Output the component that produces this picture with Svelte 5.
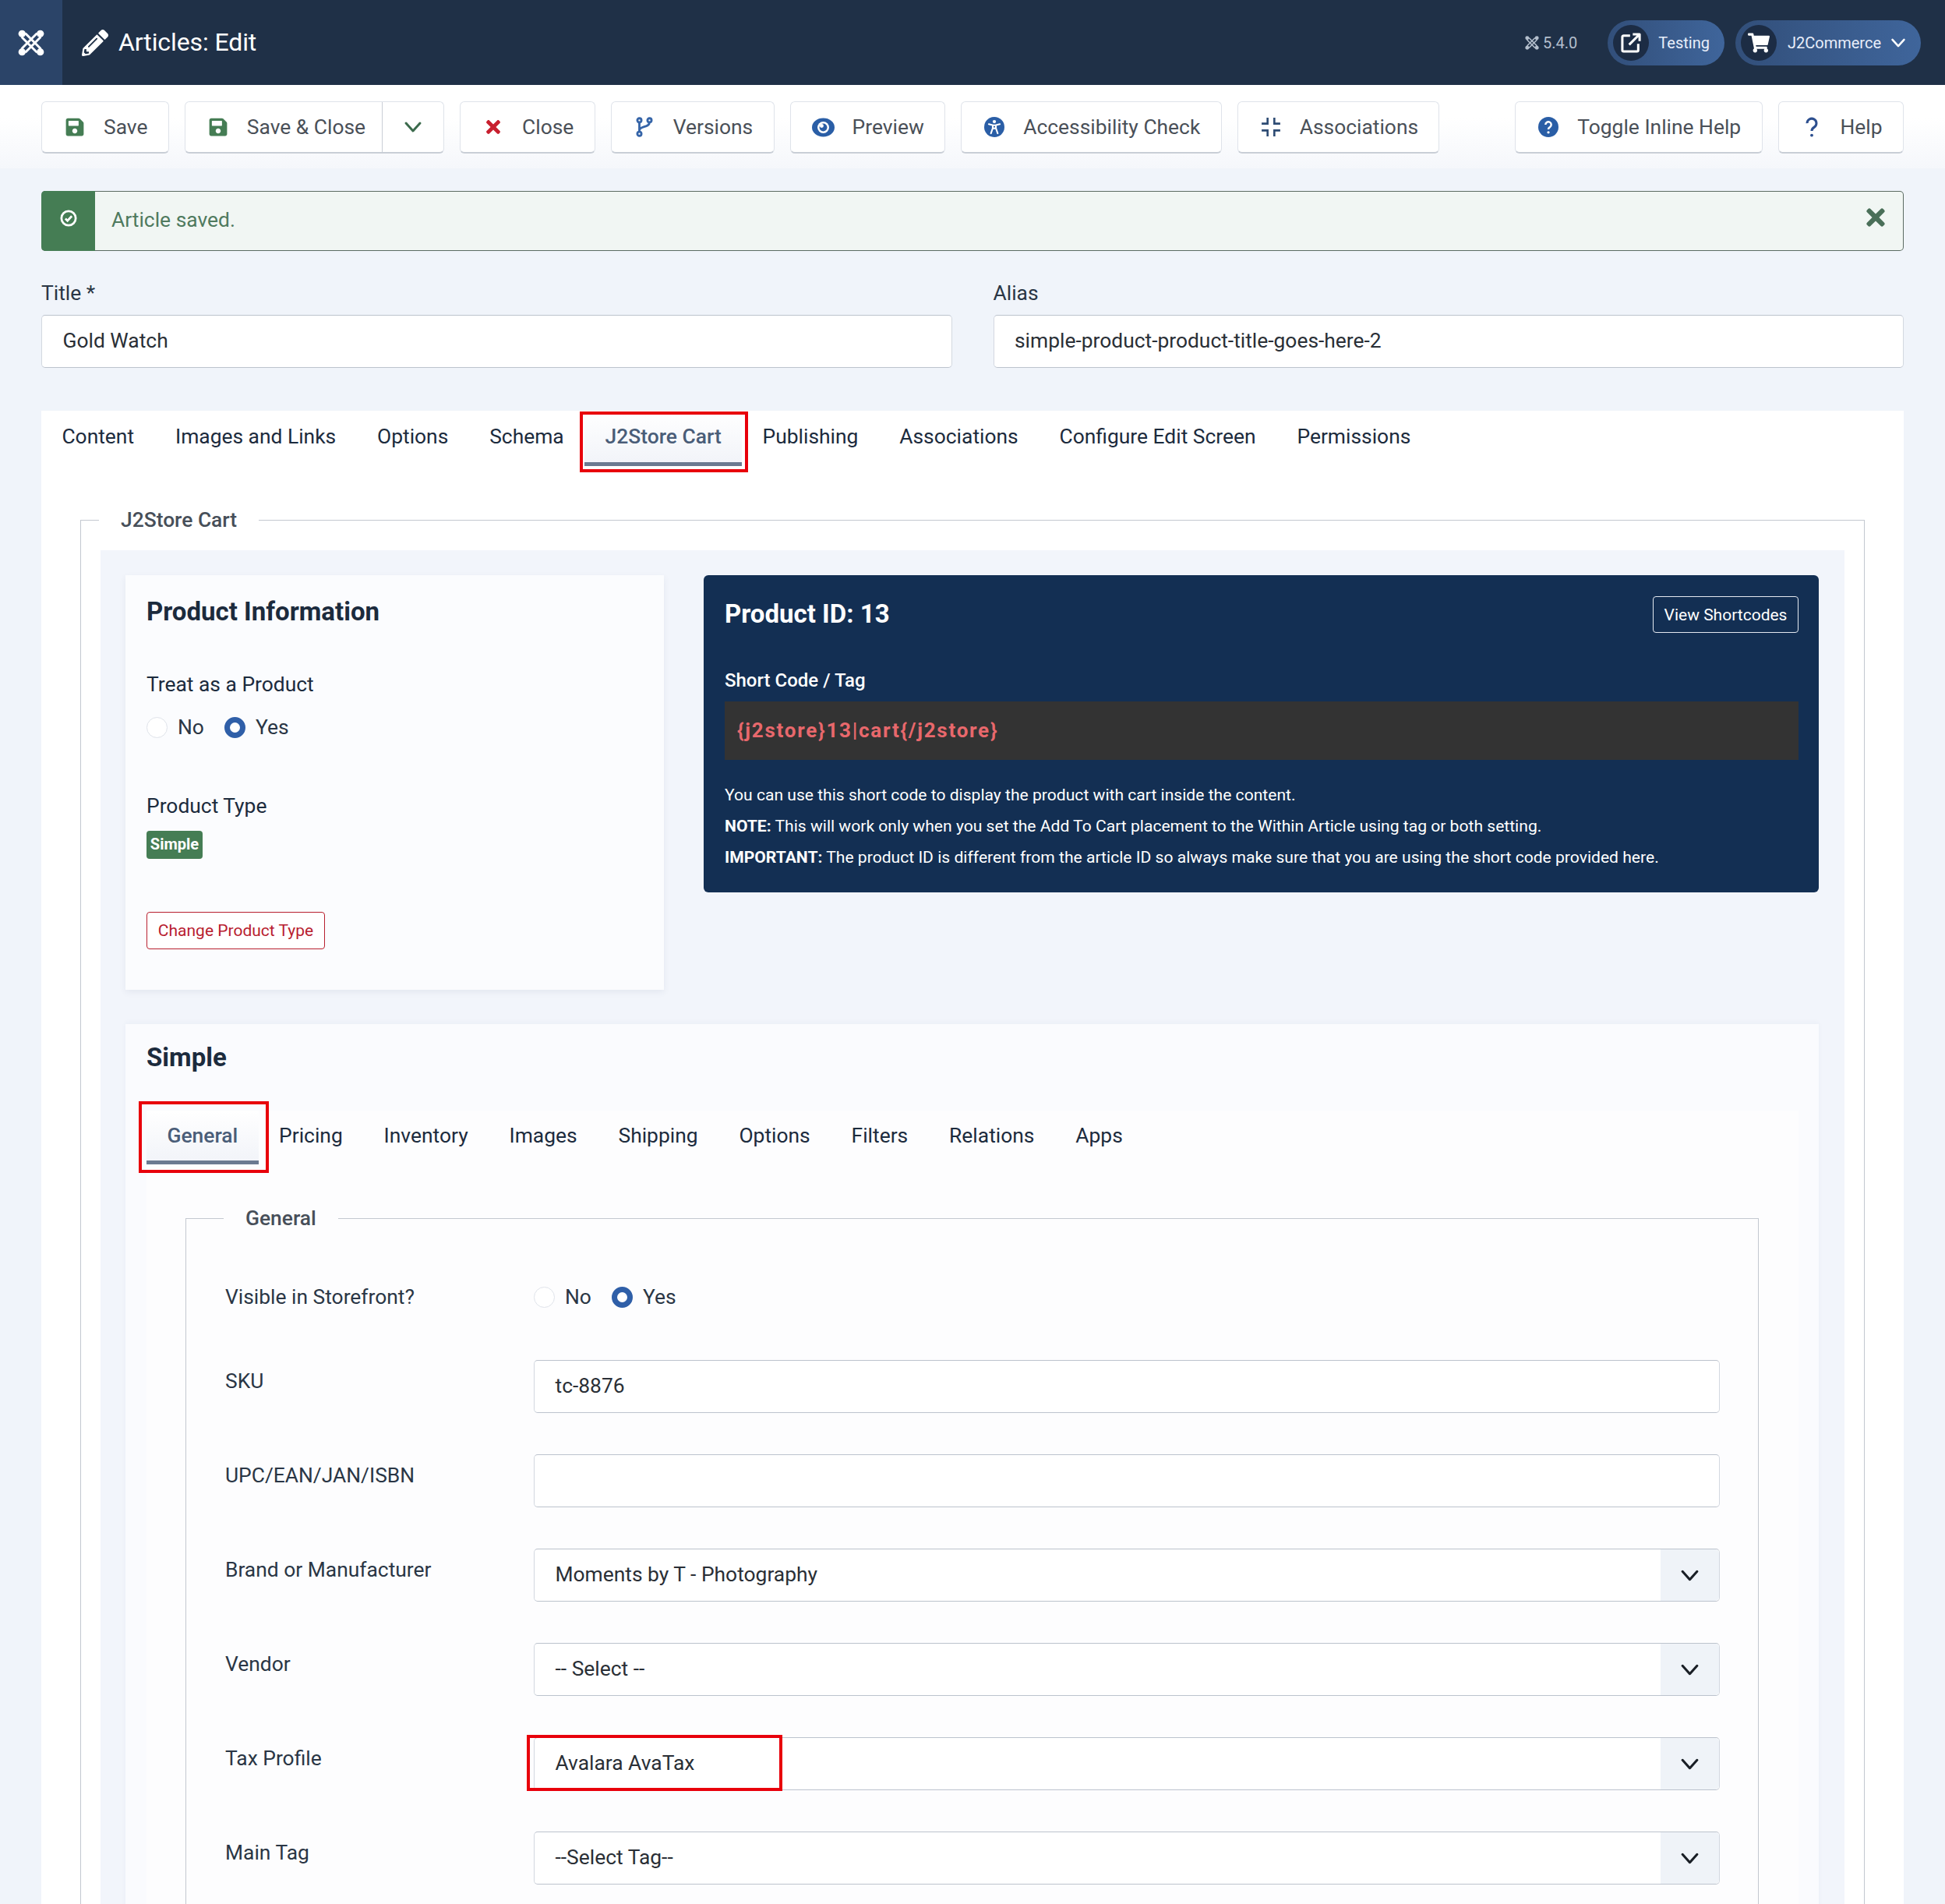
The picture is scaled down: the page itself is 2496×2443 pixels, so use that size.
<script lang="ts">
  const icons = {
    save: { vb: "0 0 448 512", d: "M433.941 129.941l-83.882-83.882A48 48 0 0 0 316.118 32H48C21.49 32 0 53.49 0 80v352c0 26.51 21.49 48 48 48h352c26.51 0 48-21.49 48-48V163.882a48 48 0 0 0-14.059-33.941zM224 416c-35.346 0-64-28.654-64-64 0-35.346 28.654-64 64-64s64 28.654 64 64c0 35.346-28.654 64-64 64zm96-304.52V212c0 6.627-5.373 12-12 12H76c-6.627 0-12-5.373-12-12V108c0-6.627 5.373-12 12-12h228.52c3.183 0 6.235 1.264 8.485 3.515l3.48 3.48A11.996 11.996 0 0 1 320 111.48z" },
    times: { vb: "0 0 352 512", d: "M242.72 256l100.07-100.07c12.28-12.28 12.28-32.19 0-44.48l-22.24-22.24c-12.28-12.28-32.19-12.28-44.48 0L176 189.28 75.93 89.21c-12.28-12.28-32.19-12.28-44.48 0L9.21 111.45c-12.28 12.28-12.28 32.19 0 44.48L109.28 256 9.21 356.07c-12.28 12.28-12.28 32.19 0 44.48l22.24 22.24c12.28 12.28 32.2 12.28 44.48 0L176 322.72l100.07 100.07c12.28 12.28 32.2 12.28 44.48 0l22.24-22.24c12.28-12.28 12.28-32.19 0-44.48L242.72 256z" },
    pencil: { vb: "0 0 512 512", d: "M497.9 142.1l-46.1 46.1c-4.7 4.7-12.3 4.7-17 0l-111-111c-4.7-4.7-4.7-12.3 0-17l46.1-46.1c18.7-18.7 49.1-18.7 67.9 0l60.1 60.1c18.8 18.7 18.8 49.1 0 67.9zM284.2 99.8L21.6 362.4.4 483.9c-2.9 16.4 11.4 30.6 27.8 27.8l121.5-21.3 262.6-262.6c4.7-4.7 4.7-12.3 0-17l-111-111c-4.8-4.7-12.4-4.7-17.1 0zM124.1 339.9c-5.5-5.5-5.5-14.3 0-19.8l154-154c5.5-5.5 14.3-5.5 19.8 0s5.5 14.3 0 19.8l-154 154c-5.5 5.5-14.3 5.5-19.8 0zM88 424h48v36.3l-64.5 11.3-31.1-31.1L51.7 376H88v48z" },
    cart: { vb: "0 0 576 512", d: "M528.12 301.319l47.273-208C578.806 78.301 567.391 64 551.99 64H159.208l-9.166-44.81C147.758 8.021 137.93 0 126.529 0H24C10.745 0 0 10.745 0 24v16c0 13.255 10.745 24 24 24h69.883l70.248 343.435C147.325 417.1 136 435.222 136 456c0 30.928 25.072 56 56 56s56-25.072 56-56c0-15.674-6.447-29.835-16.824-40h209.647C430.447 426.165 424 440.326 424 456c0 30.928 25.072 56 56 56s56-25.072 56-56c0-22.172-12.888-41.332-31.579-50.405l5.517-24.276c3.413-15.018-8.002-29.319-23.403-29.319H218.117l-6.545-32h293.145c11.206 0 20.92-7.754 23.403-18.681z" },
  };

  const leftTools = [
    { label: "Versions", icon: "branch" },
    { label: "Preview", icon: "eye" },
    { label: "Accessibility Check", icon: "access" },
    { label: "Associations", icon: "compress" },
  ];

  const mainTabs = ["Content", "Images and Links", "Options", "Schema", "J2Store Cart", "Publishing", "Associations", "Configure Edit Screen", "Permissions"];
  const subTabs = ["General", "Pricing", "Inventory", "Images", "Shipping", "Options", "Filters", "Relations", "Apps"];

  const selects = [
    { label: "Brand or Manufacturer", value: "Moments by T - Photography" },
    { label: "Vendor", value: "-- Select --" },
    { label: "Tax Profile", value: "Avalara AvaTax", mark: true },
    { label: "Main Tag", value: "--Select Tag--" },
  ];
</script>

{#snippet fa(name, color)}
  <svg class="fa" viewBox={icons[name].vb} fill={color}><path d={icons[name].d} /></svg>
{/snippet}

{#snippet chevron(cls)}
  <svg class={cls} viewBox="0 0 24 24" fill="none" stroke="currentColor" stroke-width="3" stroke-linecap="round" stroke-linejoin="round"><path d="M3 7l9 10 9-10" /></svg>
{/snippet}

{#snippet joomla(cls)}
  <svg class={cls} viewBox="0 0 32 32" fill="currentColor" stroke="currentColor">
    <circle cx="5" cy="5" r="4.4" stroke="none" />
    <circle cx="27" cy="5" r="4.4" stroke="none" />
    <circle cx="5" cy="27" r="4.4" stroke="none" />
    <circle cx="27" cy="27" r="4.4" stroke="none" />
    <path d="M9 4.500L27.500 23M4.500 9L23 27.500M23 4.500L4.500 23M27.500 9L9 27.500" fill="none" stroke-width="2.800" />
  </svg>
{/snippet}

{#snippet toolIcon(name, color)}
  {#if name === "branch"}
    <svg class="ti" viewBox="0 0 24 24" fill="none" stroke="#3564a8" stroke-width="2.600">
      <circle cx="6" cy="4" r="2.400" /><circle cx="18" cy="4" r="2.400" /><circle cx="6" cy="20" r="2.400" />
      <path d="M6 6.500v11M18 6.500c0 6.500-12 4-12 9.500" />
    </svg>
  {:else if name === "eye"}
    <svg class="ti eye" viewBox="0 0 28 24">
      <ellipse cx="14" cy="12" rx="14" ry="11.500" fill="#2a5ea6" />
      <circle cx="14" cy="12" r="7.200" fill="#fff" />
      <circle cx="14" cy="12" r="4.800" fill="#2a5ea6" />
      <circle cx="12" cy="10" r="2.400" fill="#fff" />
    </svg>
  {:else if name === "access"}
    <svg class="ti" viewBox="0 0 24 24">
      <circle cx="12" cy="12" r="12" fill="#2a5ea6" />
      <circle cx="12" cy="5.600" r="2" fill="#fff" />
      <path d="M5.500 8.600l4.600 1.200v3.600L8 19.500M18.500 8.600l-4.600 1.200v3.600l2.100 6.100M10 10h4M10.200 13.500h3.600" fill="none" stroke="#fff" stroke-width="1.900" stroke-linecap="round" />
    </svg>
  {:else if name === "compress"}
    <svg class="ti" viewBox="0 0 24 24" fill="none" stroke="#2d4b73" stroke-width="2.400">
      <path d="M8 1v7H1M16 1v7h7M1 16h7v7M23 16h-7v7" />
    </svg>
  {:else if name === "qcircle"}
    <svg class="ti" viewBox="0 0 24 24">
      <circle cx="12" cy="12" r="12" fill="#2a5ea6" />
      <path d="M8.600 9.200a3.400 3.400 0 1 1 5.200 2.900c-1.200.7-1.800 1.300-1.800 2.700" fill="none" stroke="#fff" stroke-width="2.300" />
      <circle cx="12" cy="18.300" r="1.500" fill="#fff" />
    </svg>
  {:else if name === "q"}
    <svg class="ti" viewBox="0 0 24 24">
      <path d="M6.500 7.500a5.500 5.500 0 1 1 8.500 4.600c-2 1.300-3 2.300-3 4.400" fill="none" stroke="#2d4f8f" stroke-width="2.800" />
      <circle cx="12" cy="21.800" r="1.800" fill="#2d4f8f" />
    </svg>
  {:else}
    {@render fa(name, color)}
  {/if}
{/snippet}

<div class="page">
  <header class="topbar">
    <div class="logo">{@render joomla("logo-mark")}</div>
    <div class="page-title">
      {@render fa("pencil", "#fff")}
      <span>Articles: Edit</span>
    </div>
    <div class="top-right">
      <span class="version">{@render joomla("ver-mark")}5.4.0</span>
      <div class="pill testing">
        <span class="pill-ic">
          <svg viewBox="0 0 24 24" fill="none" stroke="#fff" stroke-width="2.600" stroke-linejoin="round">
            <path d="M11 4H4a1.500 1.500 0 0 0-1.500 1.500v14.500A1.500 1.500 0 0 0 4 21.500h14.500a1.500 1.500 0 0 0 1.500-1.500v-7" />
            <path d="M10 14L21 3M14 2.500h7.500V10" />
          </svg>
        </span>
        <span class="pill-text">Testing</span>
      </div>
      <div class="pill">
        <span class="pill-ic">{@render fa("cart", "#fff")}</span>
        <span class="pill-text">J2Commerce</span>
        {@render chevron("pill-chev")}
      </div>
    </div>
  </header>

  <div class="toolbar">
    <button class="tool"><span class="tool-ic">{@render fa("save", "#457d54")}</span>Save</button>
    <div class="tool split">
      <span class="split-main"><span class="tool-ic">{@render fa("save", "#457d54")}</span>Save &amp; Close</span>
      <span class="split-toggle">{@render chevron("split-chev")}</span>
    </div>
    <button class="tool"><span class="tool-ic">{@render fa("times", "#c81f2e")}</span>Close</button>
    {#each leftTools as t}
      <button class="tool"><span class="tool-ic">{@render toolIcon(t.icon)}</span>{t.label}</button>
    {/each}
    <span class="tool-spacer"></span>
    <button class="tool"><span class="tool-ic">{@render toolIcon("qcircle")}</span>Toggle Inline Help</button>
    <button class="tool"><span class="tool-ic">{@render toolIcon("q")}</span>Help</button>
  </div>

  <main class="content">
    <div class="alert">
      <div class="alert-ic">
        <svg viewBox="0 0 24 24" fill="none" stroke="#fff" stroke-width="3"><circle cx="12" cy="12" r="10" /><path d="M7.500 12.500l3 3 6-6.500" /></svg>
      </div>
      <span class="alert-text">Article saved.</span>
      <span class="alert-close">{@render fa("times", "#4a6f58")}</span>
    </div>

    <div class="title-row">
      <div>
        <div class="field-label">Title *</div>
        <div class="input">Gold Watch</div>
      </div>
      <div>
        <div class="field-label">Alias</div>
        <div class="input">simple-product-product-title-goes-here-2</div>
      </div>
    </div>

    <section class="panel">
      <nav class="tabs">
        {#each mainTabs as tab}
          <span class="tab" class:active={tab === "J2Store Cart"}>
            {tab}
            {#if tab === "J2Store Cart"}<i class="mark mark-main"></i>{/if}
          </span>
        {/each}
      </nav>

      <fieldset class="fs fs-main">
        <legend>J2Store Cart</legend>
        <div class="inner">
          <div class="top-cards">
            <div class="info-card">
              <h3>Product Information</h3>
              <div class="info-label first">Treat as a Product</div>
              <div class="radios">
                <span class="radio"></span><span class="radio-text">No</span>
                <span class="radio on"></span><span class="radio-text">Yes</span>
              </div>
              <div class="info-label second">Product Type</div>
              <span class="badge">Simple</span>
              <button class="btn-red">Change Product Type</button>
            </div>

            <div class="dark-card">
              <div class="dark-head">
                <h3>Product ID: 13</h3>
                <button class="btn-ghost">View Shortcodes</button>
              </div>
              <div class="code-label">Short Code / Tag</div>
              <div class="code">{"{j2store}13|cart{/j2store}"}</div>
              <div class="notes">
                <p>You can use this short code to display the product with cart inside the content.</p>
                <p><b>NOTE:</b> This will work only when you set the Add To Cart placement to the Within Article using tag or both setting.</p>
                <p><b>IMPORTANT:</b> The product ID is different from the article ID so always make sure that you are using the short code provided here.</p>
              </div>
            </div>
          </div>

          <div class="simple">
            <h3>Simple</h3>
            <div class="sub-pane">
              <nav class="tabs sub">
                {#each subTabs as tab}
                  <span class="tab" class:active={tab === "General"}>
                    {tab}
                    {#if tab === "General"}<i class="mark mark-sub"></i>{/if}
                  </span>
                {/each}
              </nav>

              <fieldset class="fs fs-sub">
                <legend>General</legend>
                <div class="form">
                  <div class="row-label visible">Visible in Storefront?</div>
                  <div class="radios visible">
                    <span class="radio"></span><span class="radio-text">No</span>
                    <span class="radio on"></span><span class="radio-text">Yes</span>
                  </div>

                  <div class="row-label">SKU</div>
                  <div class="input">tc-8876</div>

                  <div class="row-label">UPC/EAN/JAN/ISBN</div>
                  <div class="input"></div>

                  {#each selects as s}
                    <div class="row-label">{s.label}</div>
                    <div class="input select">
                      <span>{s.value}</span>
                      <span class="select-btn">{@render chevron("select-chev")}</span>
                      {#if s.mark}<i class="mark mark-tax"></i>{/if}
                    </div>
                  {/each}
                </div>
              </fieldset>
            </div>
          </div>
        </div>
      </fieldset>
    </section>
  </main>
</div>

<style>
  :global(body) {
    margin: 0;
    background: #f0f4fa;
  }
  .page {
    height: 2443px;
    overflow: hidden;
    font-family: Roboto, "Liberation Sans", sans-serif;
    font-size: 26.4px;
    color: #1c2b3d;
    background: #f0f4fa;
  }
  h3 {
    margin: 0;
    font-weight: 700;
  }
  p {
    margin: 0;
  }
  button {
    font: inherit;
    cursor: pointer;
  }
  .fa {
    display: block;
    width: 100%;
    height: 100%;
  }

  .topbar {
    height: 109px;
    display: flex;
    align-items: center;
    background: #1f3047;
    color: #fff;
  }
  .logo {
    width: 80px;
    height: 109px;
    display: flex;
    align-items: center;
    justify-content: center;
    background: #2b4468;
  }
  .logo :global(.logo-mark) {
    width: 34px;
    height: 34px;
    color: #fff;
  }
  .page-title {
    display: flex;
    align-items: center;
    gap: 13px;
    margin-left: 25px;
    font-size: 32px;
    letter-spacing: -0.1px;
  }
  .page-title span {
    margin-top: -2px;
  }
  .page-title :global(.fa) {
    width: 34px;
    height: 34px;
  }
  .top-right {
    margin-left: auto;
    margin-right: 31px;
    display: flex;
    align-items: center;
    gap: 14px;
  }
  .version {
    display: flex;
    align-items: center;
    gap: 5px;
    margin-right: 25px;
    font-size: 20px;
    color: #b4bfcd;
  }
  .version :global(.ver-mark) {
    width: 18px;
    height: 18px;
    color: #b4bfcd;
  }
  .pill {
    height: 58px;
    display: flex;
    align-items: center;
    padding: 0 19px 0 7px;
    border-radius: 29px;
    background: linear-gradient(90deg, #324f7a, #3f659b);
  }
  .pill-ic {
    width: 46px;
    height: 46px;
    border-radius: 50%;
    background: #1c2c44;
    display: flex;
    align-items: center;
    justify-content: center;
    margin-right: 14px;
  }
  .testing .pill-ic {
    margin-right: 12px;
  }
  .pill-ic svg,
  .pill-ic :global(.fa) {
    width: 28px;
    height: 28px;
  }
  .pill-text {
    font-size: 20px;
    color: #e8eefa;
  }
  .pill :global(.pill-chev) {
    width: 20px;
    height: 20px;
    margin-left: 12px;
    color: #fff;
  }

  .toolbar {
    height: 107px;
    box-sizing: border-box;
    padding: 21px 53px 0;
    display: flex;
    align-items: flex-start;
    gap: 20px;
    background: linear-gradient(#fff 40%, #f5f7fb);
  }
  .tool {
    height: 67px;
    box-sizing: border-box;
    display: flex;
    align-items: center;
    padding: 0 26.400px 0 29px;
    background: #fff;
    border: 1px solid #dfe3ea;
    border-bottom: 2px solid #c9ced6;
    border-radius: 6px;
    color: #4a5058;
    white-space: nowrap;
  }
  .tool-ic {
    width: 26px;
    height: 26px;
    margin-right: 24px;
    display: flex;
    align-items: center;
    justify-content: center;
  }
  .tool-ic :global(.ti) {
    display: block;
    flex: none;
    width: 26px;
    height: 26px;
  }
  .tool-ic :global(.eye) {
    width: 29px;
    height: 25px;
  }
  .tool-spacer {
    flex: 1;
  }
  .split {
    padding: 0;
  }
  .split-main {
    display: flex;
    align-items: center;
    height: 100%;
    padding: 0 21px 0 29px;
    border-right: 1px solid #c9ced6;
  }
  .split-toggle {
    width: 78px;
    display: flex;
    justify-content: center;
  }
  .split-toggle :global(.split-chev) {
    width: 24px;
    height: 24px;
    color: #3c6b4d;
  }

  .content {
    padding: 29px 53px 0;
  }
  .alert {
    height: 77px;
    box-sizing: border-box;
    display: flex;
    align-items: stretch;
    border: 1px solid #5b6b62;
    border-left: 0;
    border-radius: 5px;
    background: #f1f6f3;
  }
  .alert-ic {
    width: 69px;
    margin: -1px 0;
    display: flex;
    justify-content: center;
    padding-top: 24px;
    box-sizing: border-box;
    background: #457d54;
    border-radius: 5px 0 0 5px;
  }
  .alert-ic svg {
    width: 22px;
    height: 22px;
  }
  .alert-text {
    margin-left: 21px;
    line-height: 72px;
    color: #4f7a5e;
  }
  .alert-close {
    margin-left: auto;
    margin-right: 23px;
    margin-top: 16px;
    width: 24px;
    height: 34px;
  }

  .title-row {
    margin-top: 39px;
    display: grid;
    grid-template-columns: 1fr 1fr;
    gap: 53px;
  }
  .field-label {
    line-height: 30px;
    margin-bottom: 13px;
    color: #2a3645;
  }
  .input {
    position: relative;
    height: 68px;
    box-sizing: border-box;
    padding: 0 26.500px 2px;
    display: flex;
    align-items: center;
    background: #fff;
    border: 1px solid #d3d8e0;
    border-top-color: #bcc3cd;
    border-bottom-color: #bcc3cd;
    border-radius: 5px;
    color: #2a2f36;
  }

  .panel {
    margin-top: 55px;
    padding-bottom: 60px;
    background: #fff;
  }
  .tabs {
    display: flex;
  }
  .tab {
    position: relative;
    height: 71px;
    box-sizing: border-box;
    padding: 0 26.450px;
    line-height: 66px;
    color: #1c2b3d;
    white-space: nowrap;
  }
  .tab.active {
    font-weight: 500;
    color: #4a5d78;
    background: linear-gradient(#fff, #f2f4f9);
    border-bottom: 5px solid #6b7a91;
  }
  .mark {
    position: absolute;
    box-sizing: border-box;
    border: 4px solid #e8000b;
    pointer-events: none;
  }
  .mark-main {
    left: -6px;
    right: -8px;
    top: 1px;
    bottom: -13px;
  }
  .mark-sub {
    left: -10px;
    right: -13px;
    top: -12px;
    bottom: -16px;
  }
  .mark-tax {
    left: -10px;
    top: -4px;
    width: 328px;
    height: 72px;
  }

  .fs {
    min-width: 0;
    margin: 0;
    border: 1px solid #c3c8d0;
  }
  .fs legend {
    padding: 0 28px;
    margin-left: -2px;
    line-height: 30px;
    font-weight: 500;
    color: #474f59;
  }
  .fs-main {
    margin: 54px 50px 0;
    padding: 24px 25px 0;
  }
  .inner {
    padding: 32px 33px 60px 32px;
    background: #f2f5fb;
  }
  .top-cards {
    display: flex;
    align-items: flex-start;
    gap: 51px;
  }
  .info-card {
    width: 691px;
    height: 532px;
    box-sizing: border-box;
    padding: 27px 27px 0;
    background: #fbfcfe;
    box-shadow: 0 3px 8px rgba(60, 80, 120, 0.08);
  }
  .info-card h3 {
    font-size: 33px;
    line-height: 40px;
    color: #1c2b3d;
  }
  .info-label {
    line-height: 30px;
  }
  .info-label.first {
    margin-top: 58px;
  }
  .info-label.second {
    margin-top: 71px;
  }
  .radios {
    display: flex;
    align-items: center;
    height: 30px;
    margin-top: 25px;
  }
  .radio {
    width: 27px;
    height: 27px;
    box-sizing: border-box;
    border-radius: 50%;
    border: 1px solid #dfe3ea;
    background: #fff;
    margin-right: 13px;
  }
  .radio.on {
    border: 7px solid #2f5fa8;
  }
  .radio-text {
    margin-right: 26px;
    color: #2a3645;
  }
  .badge {
    display: block;
    width: 72px;
    height: 36px;
    margin-top: 17px;
    border-radius: 4px;
    background: #457d54;
    color: #fff;
    font-size: 20px;
    font-weight: 700;
    line-height: 34px;
    text-align: center;
  }
  .btn-red {
    display: block;
    margin-top: 68px;
    width: 229px;
    height: 48px;
    padding: 0;
    background: #fff;
    border: 1px solid #b8202f;
    border-radius: 4px;
    color: #b8202f;
    font-size: 21px;
  }

  .dark-card {
    flex: 1;
    box-sizing: border-box;
    height: 407px;
    padding: 27px 26px 0 27px;
    background: #132f53;
    border-radius: 6px;
    color: #fff;
    font-size: 21.100px;
  }
  .dark-head {
    display: flex;
    align-items: center;
    justify-content: space-between;
    height: 47px;
  }
  .dark-head h3 {
    font-size: 33px;
    margin-bottom: 2px;
  }
  .btn-ghost {
    height: 47px;
    width: 187px;
    padding: 0;
    background: transparent;
    border: 1px solid #e4e9f0;
    border-radius: 4px;
    color: #fff;
    font-size: 21px;
  }
  .code-label {
    margin-top: 46px;
    line-height: 30px;
    font-size: 24px;
    font-weight: 500;
  }
  .code {
    margin-top: 12px;
    height: 75px;
    box-sizing: border-box;
    padding-left: 16px;
    line-height: 75px;
    background: #333333;
    color: #e8686c;
    font-size: 26px;
    font-weight: 700;
    letter-spacing: 1.750px;
  }
  .notes {
    margin-top: 25px;
    line-height: 40px;
  }

  .simple {
    margin-top: 44px;
    padding: 23px 26px 0 27px;
    background: #fafbfe;
    box-shadow: 0 -2px 6px rgba(60, 80, 120, 0.04);
  }
  .simple h3 {
    font-size: 33px;
    line-height: 40px;
  }
  .sub-pane {
    margin-top: 48px;
    background: #fdfdfe;
    padding-bottom: 40px;
  }
  .tabs.sub .tab {
    height: 69px;
    line-height: 64px;
  }
  .fs-sub {
    margin: 54px 51px 0 50px;
    padding: 71px 49px 40px 50px;
  }
  .form {
    display: grid;
    grid-template-columns: 396px 1fr;
    row-gap: 53px;
  }
  .row-label {
    padding-top: 12px;
    line-height: 30px;
    color: #2a3645;
  }
  .row-label.visible {
    padding-top: 0;
    margin-bottom: 13px;
  }
  .radios.visible {
    margin: 0 0 13px;
  }
  .select {
    padding-right: 0;
    padding-bottom: 0;
    justify-content: space-between;
  }
  .select span:first-child {
    margin-bottom: 2px;
  }
  .select-btn {
    width: 75px;
    height: 100%;
    display: flex;
    align-items: center;
    justify-content: center;
    background: #eff3f8;
    border-radius: 0 5px 5px 0;
  }
  .select-btn :global(.select-chev) {
    width: 25px;
    height: 25px;
    color: #1a1f26;
  }
</style>
